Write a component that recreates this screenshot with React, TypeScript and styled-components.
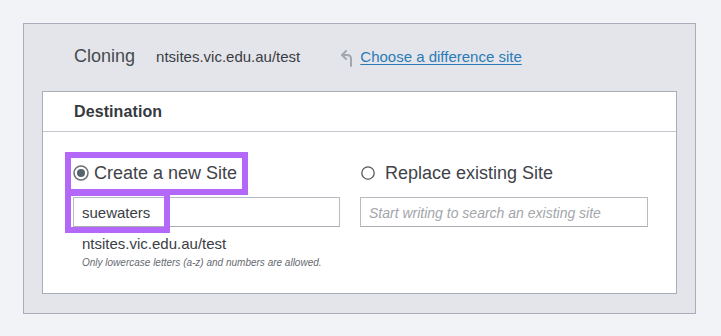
import React from "react";
import styled, { createGlobalStyle } from "styled-components";

const GlobalStyle = createGlobalStyle`
  html, body {
    margin: 0;
    padding: 0;
    background: #f2f3f7;
    font-family: "Liberation Sans", Arial, sans-serif;
  }
`;

const Page = styled.div`
  padding: 23px 26px 22px 23px;
`;

const Panel = styled.div`
  width: 671px;
  background: #e4e5ea;
  border: 1px solid #a8adb9;
  padding: 0 18px 19px 18px;
  box-sizing: border-box;
  width: 673px;
`;

const CloneBar = styled.div`
  display: flex;
  align-items: center;
  height: 67px;
  padding-left: 32px;
  box-sizing: border-box;
  padding-bottom: 2px;
`;

const CloneLabel = styled.span`
  font-size: 18px;
  color: #454a50;
  margin-right: 21px;
`;

const CloneSite = styled.span`
  font-size: 15px;
  color: #3a3e44;
  margin-right: 40px;
`;

const BackIcon = styled.svg`
  width: 14px;
  height: 18px;
  margin-right: 6px;
  margin-top: 2px;
`;

const Link = styled.a`
  font-size: 15px;
  color: #2a7bb7;
  text-decoration: underline;
  text-underline-offset: 2px;
  cursor: pointer;
`;

const Card = styled.div`
  background: #fff;
  border: 1px solid #a8adb9;
`;

const CardHeader = styled.div`
  height: 39px;
  display: flex;
  align-items: center;
  padding-left: 31px;
  border-bottom: 1px solid #c3c7ce;
  font-size: 16px;
  font-weight: bold;
  color: #36393e;
  letter-spacing: 0.1px;
`;

const CardBody = styled.div`
  display: grid;
  grid-template-columns: 267px 288px;
  column-gap: 20px;
  padding: 29px 28px 24px 30px;
`;

const Column = styled.div`
  position: relative;
  display: flex;
  flex-direction: column;
`;

const RadioLabel = styled.label`
  display: flex;
  align-items: center;
  height: 24px;
  font-size: 18px;
  color: #3f4349;
  margin-bottom: 12px;
  cursor: pointer;
`;

const RadioMark = styled.svg<{ $size: number }>`
  width: ${(p) => p.$size}px;
  height: ${(p) => p.$size}px;
  margin-right: ${(p) => (p.$size > 14 ? 5 : 10)}px;
  margin-left: ${(p) => (p.$size > 14 ? 0 : 1)}px;
  flex-shrink: 0;
`;

const TextInput = styled.input`
  box-sizing: border-box;
  width: 100%;
  height: 30px;
  border: 1px solid #b7bbc3;
  border-bottom-color: #a9adb5;
  padding: 0 8px;
  font-family: inherit;
  font-size: 15px;
  color: #3a3e44;
  outline: none;

  &::placeholder {
    color: #a3a6ab;
    font-style: italic;
    font-size: 14px;
  }
`;

const SiteUrl = styled.div`
  font-size: 15px;
  color: #3a3e44;
  line-height: 18px;
  margin-top: 8px;
  padding-left: 9px;
`;

const Hint = styled.div`
  font-size: 10px;
  font-style: italic;
  color: #666a70;
  line-height: 13px;
  margin-top: 3px;
  padding-left: 9px;
`;

const Highlight = styled.div<{ $top: number; $width: number }>`
  position: absolute;
  left: -8px;
  top: ${(p) => p.$top}px;
  width: ${(p) => p.$width}px;
  height: 43px;
  box-sizing: border-box;
  border: 6px solid #b468fa;
  pointer-events: none;
`;

function Radio({ checked }: { checked: boolean }) {
  if (checked) {
    return (
      <RadioMark $size={16} viewBox="0 0 16 16">
        <circle cx="8" cy="8" r="7" fill="#fff" stroke="#6b7077" strokeWidth="1.5" />
        <circle cx="8" cy="8" r="4" fill="#56636e" />
      </RadioMark>
    );
  }
  return (
    <RadioMark $size={14} viewBox="0 0 14 14">
      <circle cx="7" cy="7" r="6.2" fill="#fff" stroke="#54585e" strokeWidth="1.3" />
    </RadioMark>
  );
}

export default function App() {
  return (
    <>
      <GlobalStyle />
      <Page>
        <Panel>
          <CloneBar>
            <CloneLabel>Cloning</CloneLabel>
            <CloneSite>ntsites.vic.edu.au/test</CloneSite>
            <BackIcon viewBox="0 0 14 18" fill="none" stroke="#a3a7af" strokeWidth="2" strokeLinecap="round" strokeLinejoin="round">
              <path d="M6 2 L2 6 L6 10" />
              <path d="M2 6 H7 Q11 6 11 10 V17" />
            </BackIcon>
            <Link>Choose a difference site</Link>
          </CloneBar>
          <Card>
            <CardHeader>Destination</CardHeader>
            <CardBody>
              <Column>
                <RadioLabel>
                  <Radio checked />
                  Create a new Site
                </RadioLabel>
                <TextInput defaultValue="suewaters" />
                <SiteUrl>ntsites.vic.edu.au/test</SiteUrl>
                <Hint>Only lowercase letters (a-z) and numbers are allowed.</Hint>
                <Highlight $top={-9} $width={183} />
                <Highlight $top={29} $width={105} />
              </Column>
              <Column>
                <RadioLabel>
                  <Radio checked={false} />
                  Replace existing Site
                </RadioLabel>
                <TextInput placeholder="Start writing to search an existing site" />
              </Column>
            </CardBody>
          </Card>
        </Panel>
      </Page>
    </>
  );
}
